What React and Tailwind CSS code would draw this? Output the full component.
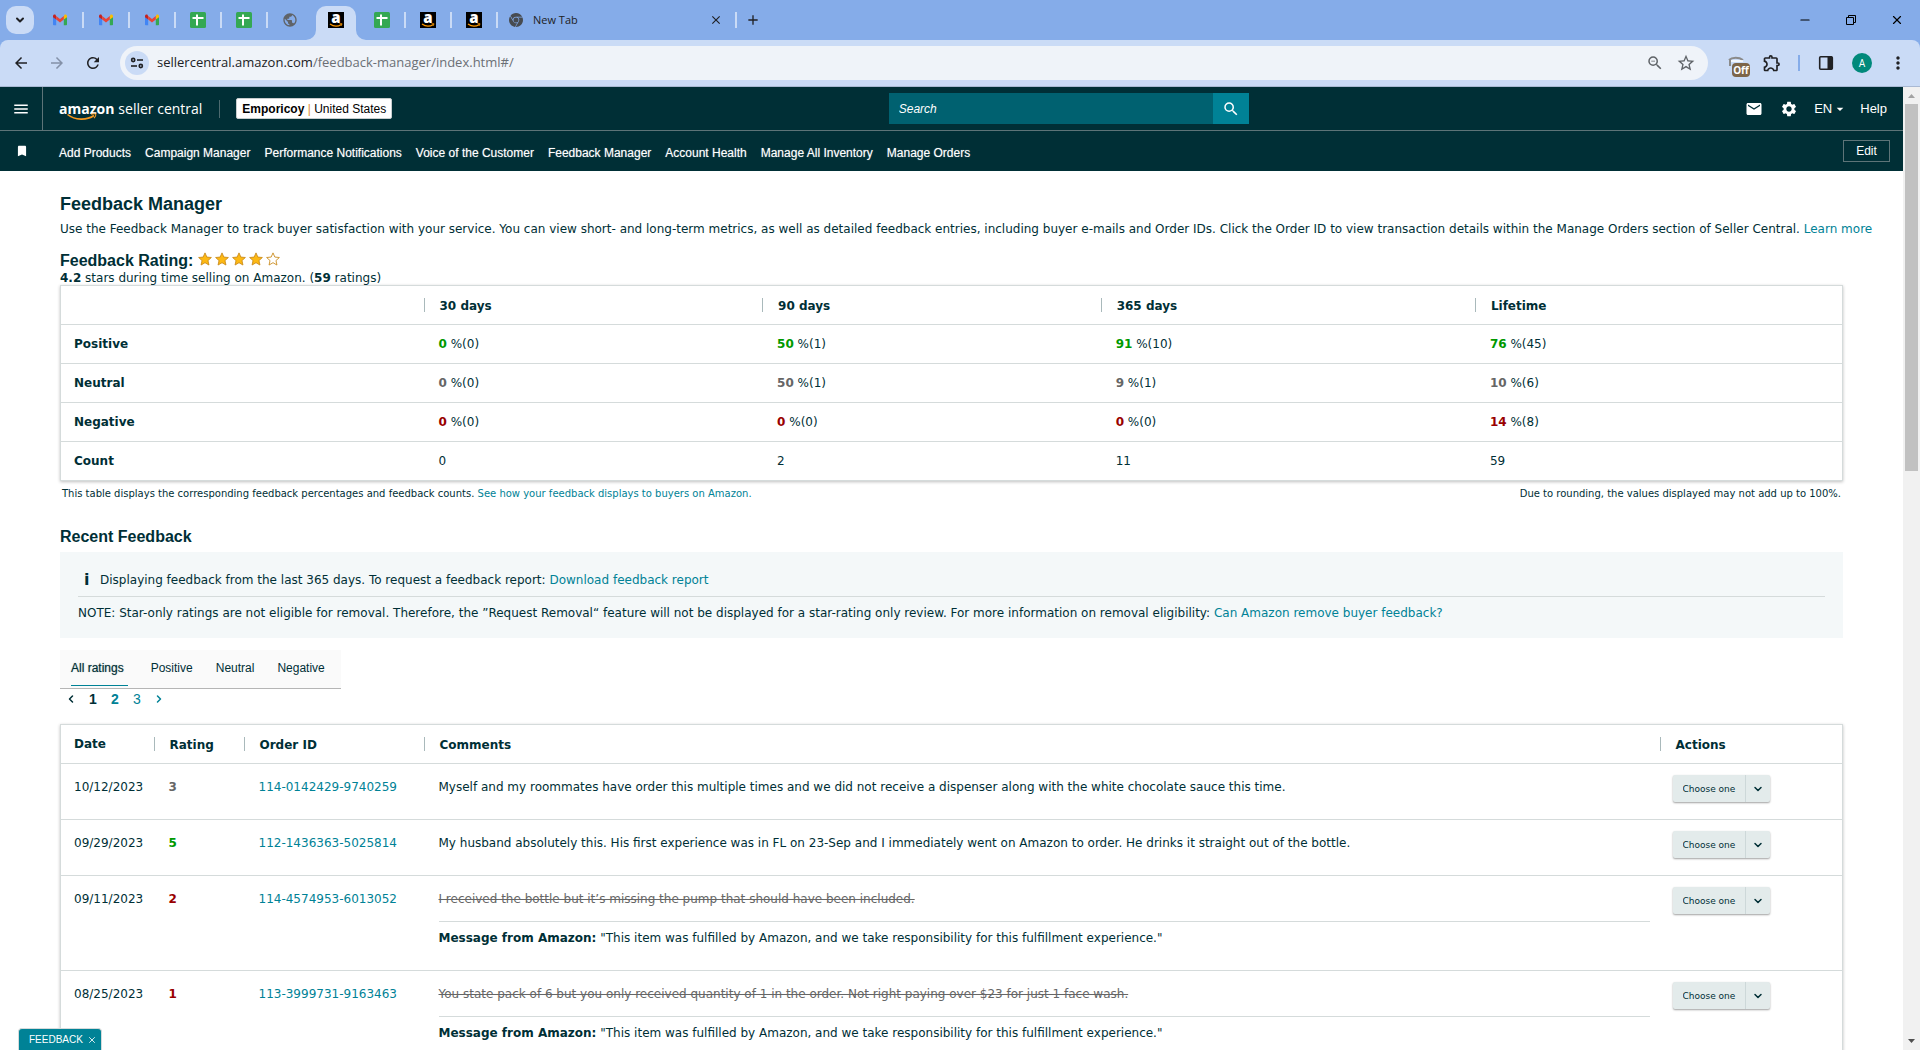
import React, { useState } from 'react';
import {
  MdArrowBack,
  MdArrowForward,
  MdRefresh,
  MdPublic,
  MdZoomOut,
  MdStarBorder,
  MdOutlineExtension,
  MdMoreVert,
  MdMail,
  MdSettings,
  MdSearch,
  MdMenu,
  MdBookmark,
  MdArrowDropDown,
  MdAdd,
  MdClose
} from 'react-icons/md';
import { SiGooglechrome } from 'react-icons/si';
import { ChevronDown, ChevronLeft, ChevronRight, Minus, X } from 'lucide-react';

const GmailIcon = () => (
  <svg viewBox="0 0 16 12" className="w-4 h-3">
    <path d="M1 1.6V10.4a.8.8 0 0 0 .8.8H4.2V5Z" fill="#4285f4" />
    <path d="M15 1.6V10.4a.8.8 0 0 1-.8.8H11.8V5Z" fill="#34a853" />
    <path d="M11.8 2.3V5.6L15 3.2V2c0-1.300-1.500-2-2.500-1.200Z" fill="#fbbc04" />
    <path d="M1 2v1.200L4.200 5.600V2.300L3.500.8C2.500 0 1 .7 1 2Z" fill="#c5221f" />
    <path d="M4.200 5.600V2L8 4.900 11.800 2V5.600L8 8.500Z" fill="#ea4335" />
  </svg>
);

const SheetsIcon = () => (
  <svg viewBox="0 0 16 16" className="w-4 h-4">
    <rect width="16" height="16" rx="1.500" fill="#34a853" />
    <path d="M2.500 6H13.500M7 2.500V13.500" stroke="#fff" strokeWidth="2" />
  </svg>
);

const AmazonIcon = () => (
  <svg viewBox="0 0 16 16" className="w-4 h-4 overflow-visible">
    <rect width="16" height="16" fill="#000" />
    <text x="8" y="10.500" textAnchor="middle" fill="#fff" fontFamily="Open Sans, sans-serif" fontWeight="800" fontSize="15">a</text>
    <path d="M2 12c3.500 2.600 8 2.600 11.500.4" fill="none" stroke="#f90" strokeWidth="1.200" />
    <path d="M11.500 11.700h2.500l-.6 2" fill="none" stroke="#f90" strokeWidth=".8" />
  </svg>
);

const GlobeIcon = () => <MdPublic className="w-4 h-4 text-[#5f6368]" />;

const TabFlare = ({ className }) => (
  <svg viewBox="0 0 10 10" className={className}>
    <path d="M10 0V10H0A10 10 0 0 0 10 0Z" fill="#cadbf6" />
  </svg>
);

const SiteInfoIcon = () => (
  <svg viewBox="0 0 14 14" className="w-3.5 h-3.5" fill="none" stroke="#202124" strokeWidth="1.600">
    <circle cx="3.200" cy="4" r="1.600" />
    <path d="M7 4H13" />
    <circle cx="10.800" cy="10" r="1.600" />
    <path d="M1 10H7" />
  </svg>
);

const ExtensionOffIcon = () => (
  <span className="relative w-6 h-6">
    <svg viewBox="0 0 24 24" className="w-6 h-6">
      <path d="M3 9c3-3 10-3 14 0M4 9v6" fill="none" stroke="#8a8a8a" strokeWidth="2" />
      <path d="M5 10h12" stroke="#fff" strokeWidth="1.500" />
    </svg>
    <span className="absolute left-1.5 top-3 w-[18px] h-3.5 rounded bg-[#7d6549] text-white text-[10px] leading-3.5 font-bold text-center font-['Open_Sans',sans-serif]">Off</span>
  </span>
);

const SidePanelIcon = () => (
  <svg viewBox="0 0 16 16" className="w-4 h-4">
    <rect x="1.700" y="1.700" width="12.600" height="12.600" rx="1" fill="none" stroke="#202124" strokeWidth="1.600" />
    <path d="M9.500 1.500H14V14.500H9.500Z" fill="#202124" />
  </svg>
);

const RestoreIcon = () => (
  <svg viewBox="0 0 10 10" className="w-2.5 h-2.5" fill="none" stroke="#000">
    <path d="M.5 2.500H7.500V9.500H.5ZM2.500 2.500V.5H9.500V7.500H7.500" />
  </svg>
);

const SellerCentralLogo = () => (
  <a href="#home" className="relative flex items-center gap-1 text-sm leading-5 text-white font-['Open_Sans',sans-serif]">
    <span className="font-bold">amazon</span>
    <span>seller central</span>
    <svg viewBox="0 0 30 8" className="absolute left-2 top-3.5 w-[30px] h-2" fill="none" stroke="#f7981d">
      <path d="M.5 1.500C8 7.500 20 7.500 27 2.500" strokeWidth="1.600" />
      <path d="M24 1.300C26 .8 28 .7 28.500 1.200S28 4 27 5.200" strokeWidth="1.100" />
    </svg>
  </a>
);

const Star = ({ filled }) => (
  <svg viewBox="0 0 16 16" className="w-3.5 h-3.5">
    <path
      d="M8 1L10.100 5.800 15.300 6.300 11.400 9.800 12.500 14.900 8 12.200 3.500 14.900 4.600 9.800.7 6.300 5.900 5.800Z"
      fill={filled ? '#fdb913' : '#fff'}
      stroke="#c98a1b"
      strokeWidth="1"
      strokeLinejoin="round"
    />
  </svg>
);

const pinnedTabs = [
  { icon: GmailIcon, label: 'Gmail', divider: true },
  { icon: GmailIcon, label: 'Gmail', divider: true },
  { icon: GmailIcon, label: 'Gmail', divider: true },
  { icon: SheetsIcon, label: 'Sheets', divider: true },
  { icon: SheetsIcon, label: 'Sheets', divider: true },
  { icon: GlobeIcon, label: 'Site' },
  { icon: AmazonIcon, label: 'Amazon', active: true },
  { icon: SheetsIcon, label: 'Sheets', divider: true },
  { icon: AmazonIcon, label: 'Amazon', divider: true },
  { icon: AmazonIcon, label: 'Amazon', divider: true }
];

const navLinks = [
  'Add Products',
  'Campaign Manager',
  'Performance Notifications',
  'Voice of the Customer',
  'Feedback Manager',
  'Account Health',
  'Manage All Inventory',
  'Manage Orders'
];

const metrics = [
  { label: 'Positive', color: 'text-[#009900]', values: [['0', '0'], ['50', '1'], ['91', '10'], ['76', '45']] },
  { label: 'Neutral', color: 'text-[#666666]', values: [['0', '0'], ['50', '1'], ['9', '1'], ['10', '6']] },
  { label: 'Negative', color: 'text-[#990000]', values: [['0', '0'], ['0', '0'], ['0', '0'], ['14', '8']] }
];

const amazonMessage = '"This item was fulfilled by Amazon, and we take responsibility for this fulfillment experience."';

const feedback = [
  {
    date: '10/12/2023',
    rating: 3,
    color: 'text-[#666666]',
    order: '114-0142429-9740259',
    comment: 'Myself and my roommates have order this multiple times and we did not receive a dispenser along with the white chocolate sauce this time.'
  },
  {
    date: '09/29/2023',
    rating: 5,
    color: 'text-[#009900]',
    order: '112-1436363-5025814',
    comment: 'My husband absolutely this. His first experience was in FL on 23-Sep and I immediately went on Amazon to order. He drinks it straight out of the bottle.'
  },
  {
    date: '09/11/2023',
    rating: 2,
    color: 'text-[#990000]',
    order: '114-4574953-6013052',
    comment: 'I received the bottle but it’s missing the pump that should have been included.',
    struck: true
  },
  {
    date: '08/25/2023',
    rating: 1,
    color: 'text-[#990000]',
    order: '113-3999731-9163463',
    comment: 'You state pack of 6 but you only received quantity of 1 in the order. Not right paying over $23 for just 1 face wash.',
    struck: true
  }
];

const BrowserTabs = () => (
  <div className="flex items-center h-10 bg-[#85ace9] pl-1.5">
    <button aria-label="Search tabs" className="flex items-center justify-center w-7 h-7 mr-[3px] rounded-[10px] bg-[#cadbf6]">
      <ChevronDown className="w-3 h-3 text-[#202124]" strokeWidth={4} />
    </button>
    {pinnedTabs.map((tab, index) => (
      <div key={index} className="relative flex items-center justify-center w-[46px] h-10">
        {tab.active && (
          <>
            <span className="absolute inset-x-[3px] top-1.5 bottom-0 rounded-t-[10px] bg-[#cadbf6]" />
            <TabFlare className="absolute -left-[7px] bottom-0 w-2.5 h-2.5" />
            <TabFlare className="absolute -right-[7px] bottom-0 w-2.5 h-2.5 -scale-x-100" />
          </>
        )}
        <button aria-label={tab.label} className="relative">
          <tab.icon />
        </button>
        {tab.divider && <span className="absolute -right-px top-3 w-0.5 h-4 bg-[#cadbf6]" />}
      </div>
    ))}
    <div className="flex items-center w-[238px] px-3 text-[#202124]">
      <SiGooglechrome className="w-3.5 h-3.5 text-[#474b50]" />
      <span className="ml-2.5 text-[11px] font-['Open_Sans',sans-serif]">New Tab</span>
      <button aria-label="Close tab" className="ml-auto">
        <MdClose className="w-3.5 h-3.5" />
      </button>
    </div>
    <span className="w-0.5 h-4 bg-[#cadbf6]" />
    <button aria-label="New tab" className="ml-2">
      <MdAdd className="w-4 h-4 text-[#202124]" />
    </button>
    <div className="flex items-center gap-[34px] ml-auto pr-4">
      <button aria-label="Minimize"><Minus className="w-3.5 h-3.5" strokeWidth={2} /></button>
      <button aria-label="Restore"><RestoreIcon /></button>
      <button aria-label="Close"><X className="w-3.5 h-3.5" strokeWidth={2} /></button>
    </div>
  </div>
);

const BrowserToolbar = () => (
  <div className="bg-[#85ace9]">
    <div className="flex items-center h-[47px] px-3 rounded-t-lg bg-[#cadbf6] border-b border-[#a9b9d3] text-[#202124]">
      <div className="flex items-center gap-[18px]">
        <button aria-label="Back"><MdArrowBack className="w-[18px] h-[18px]" /></button>
        <button aria-label="Forward"><MdArrowForward className="w-[18px] h-[18px] text-[#8491a8]" /></button>
        <button aria-label="Reload"><MdRefresh className="w-[18px] h-[18px]" /></button>
      </div>
      <div className="flex flex-1 items-center h-[34px] ml-[18px] pl-[5px] pr-3 rounded-full bg-[#eff3f9]">
        <button aria-label="Site information" className="flex items-center justify-center w-6 h-6 rounded-full bg-[#cadbf6]">
          <SiteInfoIcon />
        </button>
        <p className="ml-2 text-[13px] font-['Open_Sans',sans-serif]">
          sellercentral.amazon.com<span className="text-[#6b6f75]">/feedback-manager/index.html#/</span>
        </p>
        <div className="flex items-center gap-3 ml-auto text-[#5f6368]">
          <button aria-label="Zoom"><MdZoomOut className="w-[18px] h-[18px]" /></button>
          <button aria-label="Bookmark"><MdStarBorder className="w-5 h-5" /></button>
        </div>
      </div>
      <div className="flex items-center ml-[18px]">
        <ExtensionOffIcon />
        <button aria-label="Extensions" className="ml-3"><MdOutlineExtension className="w-5 h-5" /></button>
        <span className="w-0.5 h-4 ml-4 bg-[#85ace9]" />
        <button aria-label="Side panel" className="ml-[18px]"><SidePanelIcon /></button>
        <button className="ml-[18px] w-5 h-5 rounded-full bg-[#00897b] text-white text-[10px] font-['Roboto',sans-serif]">A</button>
        <button aria-label="Menu" className="ml-4"><MdMoreVert className="w-5 h-5" /></button>
      </div>
    </div>
  </div>
);

const SiteHeader = () => (
  <header className="bg-[#002f36] text-white font-['Liberation_Sans',sans-serif]">
    <div className="grid grid-cols-[576fr_360px_424fr] items-center h-11 border-b border-[#5d7478]">
      <div className="flex items-center h-full">
        <button aria-label="Open menu" className="flex items-center justify-center w-[43px] h-full border-r border-[#5d7478]">
          <MdMenu className="w-[18px] h-[18px]" />
        </button>
        <div className="flex items-center pl-4">
          <SellerCentralLogo />
          <span className="w-px h-[18px] ml-[17px] bg-[#4d6a6f]" />
          <button className="ml-4 px-[5px] h-[21px] rounded-xs border border-[#c7cdce] bg-white text-xs text-black">
            <b>Emporicoy</b> <span className="text-[#e0902e]">|</span> United States
          </button>
        </div>
      </div>
      <form className="flex h-[31px]" onSubmit={(e) => e.preventDefault()}>
        <input
          type="search"
          aria-label="Search"
          placeholder="Search"
          className="flex-1 min-w-0 px-2.5 bg-[#006170] text-xs placeholder:italic placeholder:text-white outline-none"
        />
        <button aria-label="Submit search" className="flex items-center justify-center w-9 bg-[#008296]">
          <MdSearch className="w-[18px] h-[18px]" />
        </button>
      </form>
      <div className="flex items-center justify-end pr-4 text-[13px]">
        <a href="#mail" aria-label="Messages"><MdMail className="w-[18px] h-[18px]" /></a>
        <a href="#settings" aria-label="Settings" className="ml-[17px]"><MdSettings className="w-[18px] h-[18px]" /></a>
        <button className="flex items-center ml-4">
          EN <MdArrowDropDown className="w-4 h-4" />
        </button>
        <a href="#help" className="ml-3">Help</a>
      </div>
    </div>
    <nav className="flex items-center h-10 pr-[13px] text-xs">
      <span className="flex justify-center w-[43px]"><MdBookmark className="w-3.5 h-3.5" /></span>
      <div className="flex items-center gap-3.5 pl-4 pt-1">
        {navLinks.map((link) => (
          <a key={link} href="#nav" className="[text-shadow:0_0_1px_#ffffff80]">{link}</a>
        ))}
      </div>
      <button className="ml-auto w-[47px] h-[22px] border border-[#5d7478]">Edit</button>
    </nav>
  </header>
);

const HeadCell = ({ children }) => (
  <th scope="col" className="text-left font-bold">
    <span className="block h-3.5 pl-[15px] border-l border-[#a9b9bb] leading-4">{children}</span>
  </th>
);

const MetricsTable = () => (
  <table className="w-full table-fixed border border-[#d5dbdb] shadow-[0_1px_3px_#00000040]">
    <colgroup>
      <col className="w-[363px]" />
      <col className="w-[19%]" />
      <col className="w-[19%]" />
      <col className="w-[21%]" />
      <col />
    </colgroup>
    <thead>
      <tr className="h-[39px] border-b border-[#d5dbdb]">
        <td />
        <HeadCell>30 days</HeadCell>
        <HeadCell>90 days</HeadCell>
        <HeadCell>365 days</HeadCell>
        <HeadCell>Lifetime</HeadCell>
      </tr>
    </thead>
    <tbody>
      {metrics.map((row) => (
        <tr key={row.label} className="h-[39px] border-b border-[#d5dbdb]">
          <th scope="row" className="pl-[13px] text-left font-bold">{row.label}</th>
          {row.values.map(([percent, count], index) => (
            <td key={index} className="pl-[15px]">
              <b className={row.color}>{percent}</b> %({count})
            </td>
          ))}
        </tr>
      ))}
      <tr className="h-[39px]">
        <th scope="row" className="pl-[13px] text-left font-bold">Count</th>
        {['0', '2', '11', '59'].map((count) => (
          <td key={count} className="pl-[15px]">{count}</td>
        ))}
      </tr>
    </tbody>
  </table>
);

const ActionSelect = ({ order }) => (
  <span className="relative inline-flex w-[97px] h-[27px] rounded-xs bg-[#e3ebeb] shadow-[0_1px_2px_#00000060]">
    <select aria-label={`Action for order ${order}`} className="w-full pl-2.5 appearance-none text-[9px]">
      <option>Choose one</option>
    </select>
    <span className="absolute right-0 inset-y-0 flex items-center justify-center w-[25px] border-l border-[#cdd8d9] pointer-events-none">
      <ChevronDown className="w-3 h-3" strokeWidth={3} />
    </span>
  </span>
);

const FeedbackTable = () => (
  <table className="w-full table-fixed border border-[#d5dbdb] shadow-[0_1px_3px_#00000040]">
    <colgroup>
      <col className="w-[93px]" />
      <col className="w-[90px]" />
      <col className="w-[180px]" />
      <col />
      <col className="w-[183px]" />
    </colgroup>
    <thead>
      <tr className="h-[39px] border-b border-[#d5dbdb]">
        <th scope="col" className="pl-[13px] text-left font-bold">Date</th>
        <HeadCell>Rating</HeadCell>
        <HeadCell>Order ID</HeadCell>
        <HeadCell>Comments</HeadCell>
        <HeadCell>Actions</HeadCell>
      </tr>
    </thead>
    <tbody>
      {feedback.map((item) => (
        <tr key={item.order} className="h-14 border-b border-[#d5dbdb] align-top">
          <td className="pl-[13px] pt-[15px] leading-4">{item.date}</td>
          <td className="pl-[15px] pt-[15px] leading-4"><b className={item.color}>{item.rating}</b></td>
          <td className="pl-[15px] pt-[15px] leading-4">
            <a href="#order" className="text-[#008296]">{item.order}</a>
          </td>
          <td className="pl-[15px] pr-2.5 pt-[15px] leading-4">
            {item.struck ? (
              <>
                <s className="block text-[#666666]">{item.comment}</s>
                <p className="mt-3.5 pt-2 pb-6 border-t border-[#d5dbdb]">
                  <b>Message from Amazon:</b> {amazonMessage}
                </p>
              </>
            ) : (
              item.comment
            )}
          </td>
          <td className="pl-[13px] pt-[11px]"><ActionSelect order={item.order} /></td>
        </tr>
      ))}
    </tbody>
  </table>
);

const ratingTabs = ['All ratings', 'Positive', 'Neutral', 'Negative'];

const RatingTabs = () => {
  const [activeTab, setActiveTab] = useState('All ratings');

  return (
    <div className="flex gap-[23px] w-fit h-[39px] mt-3 pl-[11px] pr-4 bg-[#fafafa] border-b border-[#b5b5b5] text-xs font-['Liberation_Sans',sans-serif]">
      {ratingTabs.map((tab) => (
        <button
          key={tab}
          onClick={() => setActiveTab(tab)}
          className={`h-9 border-b ${
            activeTab === tab ? 'pr-1 border-[#008296] [text-shadow:0_0_1px_#002f3680]' : 'border-transparent'
          }`}
        >
          {tab}
        </button>
      ))}
    </div>
  );
};

const Pagination = () => (
  <nav aria-label="Pages" className="flex items-center h-5 text-sm font-['Liberation_Sans',sans-serif] text-[#008296]">
    <button aria-label="Previous" className="flex justify-center w-[22px] text-[#002f36]"><ChevronLeft className="w-3 h-3" strokeWidth={3} /></button>
    <button className="w-[22px] font-bold text-[#002f36]">1</button>
    <button className="w-[22px] font-bold">2</button>
    <button className="w-[22px]">3</button>
    <button aria-label="Next" className="flex justify-center w-[22px]"><ChevronRight className="w-3 h-3" strokeWidth={3} /></button>
  </nav>
);

const ScrollBar = () => (
  <div className="flex flex-col items-center w-[17px] bg-[#f1f1f1]" aria-hidden="true">
    <svg viewBox="0 0 17 17" className="w-[17px] h-[17px]"><path d="M5 11L8.500 7 12 11Z" fill="#a3a3a3" /></svg>
    <div className="flex-1 w-[13px]">
      <div className="h-[39.5%] bg-[#c1c1c1]" />
    </div>
    <svg viewBox="0 0 17 17" className="w-[17px] h-[17px]"><path d="M5 6L8.500 10 12 6Z" fill="#505050" /></svg>
  </div>
);

const App = () => {
  return (
    <div className="flex flex-col h-screen overflow-hidden bg-white">
      <BrowserTabs />
      <BrowserToolbar />
      <div className="flex flex-1 min-h-0">
        <div className="flex-1 min-w-0 overflow-hidden">
          <SiteHeader />
          <main className="px-[60px] pt-[21px] text-xs text-[#002f36] font-['DejaVu_Sans',sans-serif]">
            <h1 className="text-lg leading-6 font-bold font-['Liberation_Sans',sans-serif]">Feedback Manager</h1>
            <p className="mt-[3px] leading-5 2xl:whitespace-nowrap">
              Use the Feedback Manager to track buyer satisfaction with your service. You can view short- and long-term metrics, as well as detailed feedback entries, including buyer e-mails and Order IDs. Click the Order ID to view transaction details within the Manage Orders section of Seller Central.{' '}
              <a href="#learn" className="text-[#008296]">Learn more</a>
            </p>

            {/* Overall rating */}
            <div className="flex items-center mt-3 h-5">
              <h2 className="text-base leading-5 font-bold font-['Liberation_Sans',sans-serif]">Feedback Rating:</h2>
              <div className="flex gap-[3px] ml-[5px] pb-1" role="img" aria-label="4 out of 5 stars">
                {[1, 2, 3, 4, 5].map((n) => (
                  <Star key={n} filled={n <= 4} />
                ))}
              </div>
            </div>
            <p className="leading-3.5"><b>4.2</b> stars during time selling on Amazon. (<b>59</b> ratings)</p>
            <MetricsTable />
            <div className="flex justify-between mt-[5px] px-0.5 text-[10px] leading-4">
              <p>
                This table displays the corresponding feedback percentages and feedback counts.{' '}
                <a href="#display" className="text-[#008296]">See how your feedback displays to buyers on Amazon.</a>
              </p>
              <p>Due to rounding, the values displayed may not add up to 100%.</p>
            </div>

            {/* Recent feedback */}
            <h2 className="mt-[25px] text-base leading-5 font-bold font-['Liberation_Sans',sans-serif]">Recent Feedback</h2>
            <section className="mt-[5px] px-[18px] pt-[17px] pb-[15px] bg-[#f4f8f9]">
              <div className="flex items-center h-7 pb-1.5 border-b border-[#d5dbdb]">
                <span className="w-[22px] pl-1.5 text-base font-bold">i</span>
                <p>
                  Displaying feedback from the last 365 days. To request a feedback report:{' '}
                  <a href="#report" className="text-[#008296]">Download feedback report</a>
                </p>
              </div>
              <p className="mt-1.5 leading-5">
                NOTE: Star-only ratings are not eligible for removal. Therefore, the ”Request Removal“ feature will not be displayed for a star-rating only review. For more information on removal eligibility:{' '}
                <a href="#removal" className="text-[#008296]">Can Amazon remove buyer feedback?</a>
              </p>
            </section>
            <RatingTabs />
            <Pagination />
            <div className="mt-[15px]">
              <FeedbackTable />
            </div>
          </main>
        </div>
        <ScrollBar />
      </div>
      <div className="fixed left-[18px] bottom-0 flex items-center gap-1 h-[22px] pl-2.5 pr-1 rounded-t border border-b-0 border-[#d5dbdb] bg-[#008296] text-white text-[10px] font-['Liberation_Sans',sans-serif]">
        <button>FEEDBACK</button>
        <button aria-label="Dismiss"><X className="w-2.5 h-2.5" /></button>
      </div>
    </div>
  );
};

export default App;
